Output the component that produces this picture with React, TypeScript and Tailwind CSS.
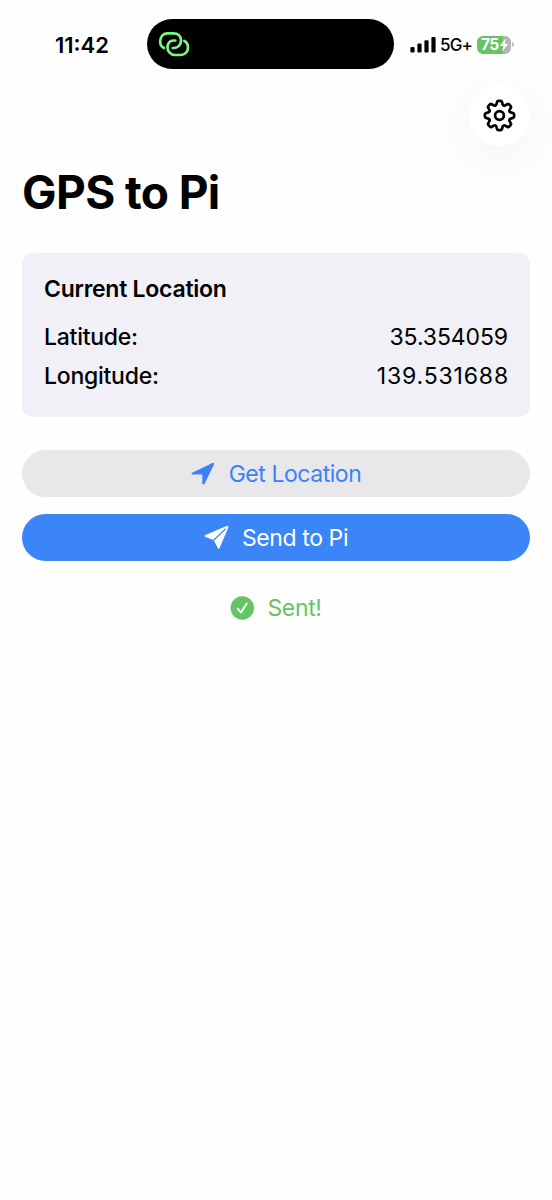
import React from "react";

const bars = [
  { x: 0, h: 5.6 },
  { x: 7, h: 9 },
  { x: 14, h: 12.2 },
  { x: 21, h: 15.6 },
];

const coordinates = [
  { label: "Latitude:", value: "35.354059", spacing: "-tracking-[0.1px]" },
  { label: "Longitude:", value: "139.531688", spacing: "tracking-[0.85px] -mr-px" },
];

const rotate = (x: number, y: number, tooth: number) => {
  const a = (tooth * Math.PI) / 4;
  const px = x * Math.cos(a) - y * Math.sin(a);
  const py = x * Math.sin(a) + y * Math.cos(a);
  return `${px.toFixed(2)} ${py.toFixed(2)}`;
};

// eight rounded teeth around the origin
const gearPath = () => {
  let d = `M${rotate(-2.9, -11.9, 0)}`;
  for (let i = 0; i < 8; i++) {
    d += `L${rotate(-2.5, -13.4, i)}Q${rotate(-2.2, -14.6, i)} ${rotate(-1, -14.6, i)}`;
    d += `L${rotate(1, -14.6, i)}Q${rotate(2.2, -14.6, i)} ${rotate(2.5, -13.4, i)}`;
    d += `L${rotate(2.9, -11.9, i)}C${rotate(3.4, -9.8, i)} ${rotate(-3.4, -9.8, i + 1)} ${rotate(-2.9, -11.9, i + 1)}`;
  }
  return d + "Z";
};

const StatusBar = () => {
  return (
    <div className="flex h-[50px] items-center">
      <div className="w-[147px] pl-[55px] pt-[2px] text-[22px] font-semibold leading-none">
        11:42
      </div>
      <div className="flex h-[50px] w-[247px] items-center rounded-full bg-black pl-[11px]">
        <svg width="32" height="26" viewBox="0 0 32 26" fill="none" stroke="#7df783" strokeWidth="2.7" strokeLinecap="round">
          <path d="M6 17C3.500 15.800 2 13 2.200 9.800C2.500 5.200 5.500 2.300 9.500 2.300H15.500C20 2.300 23 5.200 23 9.500C23 14 19.800 17 16.200 17H14.800" />
          <path d="M17.300 9.500H15.500C12 9.500 9.500 12.500 9.500 16C9.500 20.500 12.500 24 17 24H22.500C27 24 30 20.800 30 16.800C30 13.500 28.500 11 26.300 10" />
        </svg>
      </div>
      <div className="flex items-center pl-4 pt-[1px]">
        <svg width="26" height="17" viewBox="0 0 26 17" fill="black">
          {bars.map((bar) => (
            <rect key={bar.x} x={bar.x + 0.4} y={16.5 - bar.h} width="4.2" height={bar.h} rx="1.2" />
          ))}
        </svg>
        <span className="ml-1 w-[37px] whitespace-nowrap pt-[2px] text-[17px] font-medium leading-none tracking-[-0.8px]">
          5G+
        </span>
        <div className="flex h-[18px] w-[34px] items-center overflow-hidden rounded-[6px] bg-[linear-gradient(90deg,#65c466_76%,#b5b5b8_76%)] pl-1">
          <span className="pt-px text-[15.500px] font-bold leading-none tracking-[-0.5px] text-white">75</span>
          <svg width="10" height="14" viewBox="0 0 10 14" fill="white">
            <path d="M6.700 0.500L0.600 7.900H4.300L3.100 13.500L9.400 5.700H5.700Z" />
          </svg>
        </div>
        <div className="ml-px h-[5px] w-[2px] rounded-r-full bg-[#c4c4c6]" />
      </div>
    </div>
  );
};

const App = () => {
  return (
    <main className="flex h-[1200px] w-[552px] flex-col overflow-hidden bg-[#fefefe] pt-[19px] font-['Inter',sans-serif] text-black">
      <StatusBar />
      <div className="flex justify-end pr-[22px] pt-[16px]">
        <button className="flex size-[61px] items-center justify-center rounded-full bg-white shadow-[0_12px_60px_rgba(0,0,0,0.06)]">
          <svg width="34" height="34" viewBox="-16.5 -16.5 34 34" fill="none" stroke="black" strokeWidth="2.700" strokeLinejoin="round">
            <path d={gearPath()} />
            <circle r="4.400" />
          </svg>
        </button>
      </div>
      <div className="flex flex-col px-[22px] pt-[19px]">
        <h1 className="h-[54px] whitespace-nowrap text-[46px] font-bold leading-[54px] tracking-[-0.6px]">
          GPS to Pi
        </h1>
        <section className="mt-[34px] h-[164px] rounded-[11px] bg-[#f1f0f6] px-[22px] pt-[22px]">
          <h2 className="text-[23px] font-semibold leading-[29px] tracking-[-0.25px]">Current Location</h2>
          <div className="mt-[19px] flex flex-col gap-[10px]">
            {coordinates.map((item) => (
              <div key={item.label} className="flex justify-between text-[23px] leading-[29px]">
                <span className="font-medium tracking-[-0.25px]">{item.label}</span>
                <span className={item.spacing}>{item.value}</span>
              </div>
            ))}
          </div>
        </section>
        <button className="mt-[33px] flex h-[47px] items-center justify-center rounded-full bg-[#e8e8ea] text-[23px] text-[#3b82f6]">
          <svg className="mr-[14px]" width="24" height="24" viewBox="0 0 24 24" fill="currentColor">
            <path d="M1.200 10.700L21.400 1C22.600 0.500 23.500 1.400 23 2.600L13.600 21.800C13 23 11.300 22.700 11.300 21.300V13.200C11.300 12.800 11.100 12.600 10.700 12.600H1.900C0.500 12.600 0 11.300 1.200 10.700Z" />
          </svg>
          <span className="pt-[2px] tracking-[-0.45px]">Get Location</span>
        </button>
        <button className="mt-[17px] flex h-[47px] items-center justify-center rounded-full bg-[#3b85f7] text-[23px] text-white">
          <svg className="mr-[13px]" width="25" height="25" viewBox="0 0 25 25">
            <path
              d="M1.300 11L22.800 1.600C23.500 1.300 23.900 1.800 23.600 2.500L14.700 23.300L10.300 14.600Z"
              fill="currentColor"
              stroke="currentColor"
              strokeWidth="1.400"
              strokeLinejoin="round"
            />
            <path d="M21.600 3.700L9.400 15.500" stroke="#3b85f7" strokeWidth="1.200" />
          </svg>
          <span className="pt-px tracking-[-0.4px]">Send to Pi</span>
        </button>
        <div className="mt-[32px] flex h-[29px] items-center justify-center text-[23px] text-[#65c466]">
          <svg className="mr-[13px]" width="24" height="24" viewBox="0 0 24 24" fill="none">
            <circle cx="12.3" cy="12" r="11.700" fill="currentColor" />
            <path d="M7.800 12.800L11 16.500L16.700 7.400" stroke="white" strokeWidth="1.900" strokeLinecap="round" strokeLinejoin="round" />
          </svg>
          <span className="pt-px tracking-[-0.35px]">Sent!</span>
        </div>
      </div>
    </main>
  );
};

export default App;
